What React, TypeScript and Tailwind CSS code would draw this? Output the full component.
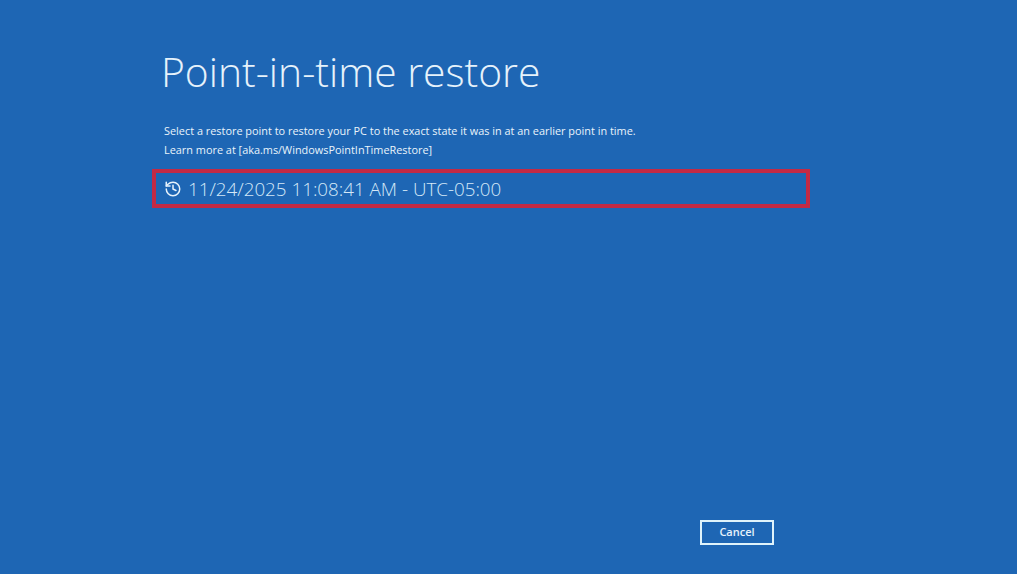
import { History } from "lucide-react";

export default function App() {
  return (
    <main className="flex h-[574px] w-full flex-col bg-[#1e66b4] font-['Open_Sans',sans-serif] text-[#eaf4fb]">
      <div className="flex-1 pl-[152px] pt-[41px]">
        {/* Page header */}
        <h1 className="pl-[9px] text-[40.8px] leading-[60px] font-light text-[#e6f2fb]">
          Point-in-time restore
        </h1>

        <div className="mt-[20px] pl-[12px] text-[10.9px] leading-[19px]">
          <p>
            Select a restore point to restore your PC to the exact state it was in at an earlier
            point in time.
          </p>
          <p>Learn more at [aka.ms/WindowsPointInTimeRestore]</p>
        </div>

        {/* Restore point row, highlighted */}
        <div className="mt-[10px] flex h-[39px] w-[658px] items-center gap-[6px] border-4 border-[#c32a45] pl-[8px] pt-[1px] text-[#d4e8f7]">
          <History size={18} strokeWidth={2} className="text-[#e6f2fb]" />
          <span className="text-[18.8px] font-light">11/24/2025 11:08:41 AM - UTC-05:00</span>
        </div>
      </div>

      <div className="flex justify-end pb-[29px] pr-[243px]">
        <button className="h-[25px] w-[74px] border-2 border-[#dff3fb] text-[11px] font-semibold text-[#e6f2fb]">
          Cancel
        </button>
      </div>
    </main>
  );
}
